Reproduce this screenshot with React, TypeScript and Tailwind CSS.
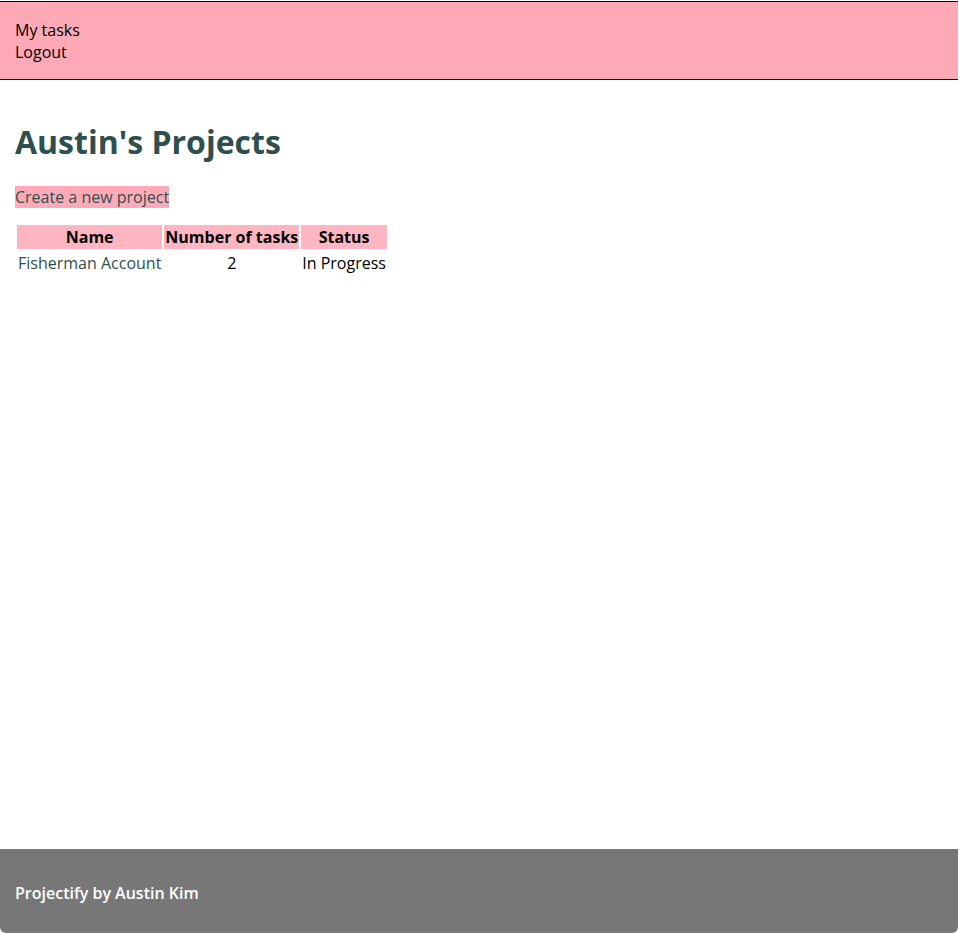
export default function App() {
  const projects = [
    { name: "Fisherman Account", tasks: 2, status: "In Progress" },
  ];
  return (
    <div className="min-h-[933px] w-[958px] flex flex-col bg-white text-black font-['Comic_Sans_MS','Open_Sans',sans-serif] text-base">
      <nav className="mt-px border-y border-black bg-[#ffa9b6] px-[15px] pt-[17px] pb-4 leading-[22px]">
        <div>
          <a href="#">My tasks</a>
        </div>
        <div>
          <a href="#">Logout</a>
        </div>
      </nav>

      <main className="px-[15px]">
        <h1 className="mt-10 mb-[21px] text-[32px] leading-[44px] font-bold text-[#2f4f4f]">
          Austin's Projects
        </h1>
        <a href="#" className="bg-[#ffaab8] text-[#2f4f4f] leading-[22px] inline-block">
          Create a new project
        </a>

        <table className="mt-[14px] border-separate border-spacing-[2px]">
          <thead>
            <tr>
              <th className="bg-[#ffb6c1] px-px py-px font-bold leading-[22px]">Name</th>
              <th className="bg-[#ffb6c1] px-px py-px font-bold leading-[22px]">Number of tasks</th>
              <th className="bg-[#ffb6c1] px-px py-px font-bold leading-[22px]">Status</th>
            </tr>
          </thead>
          <tbody>
            {projects.map((p) => (
              <tr key={p.name}>
                <td className="px-px py-px leading-[22px]">
                  <a href="#" className="text-[#2f4f4f]">{p.name}</a>
                </td>
                <td className="px-px py-px leading-[22px] text-center">{p.tasks}</td>
                <td className="px-px py-px leading-[22px]">{p.status}</td>
              </tr>
            ))}
          </tbody>
        </table>
      </main>

      <footer className="mt-auto h-[84px] bg-[#777777] rounded-b-md px-[15px] pt-1 flex items-center text-white font-semibold">
        Projectify by Austin Kim
      </footer>
    </div>
  );
}
